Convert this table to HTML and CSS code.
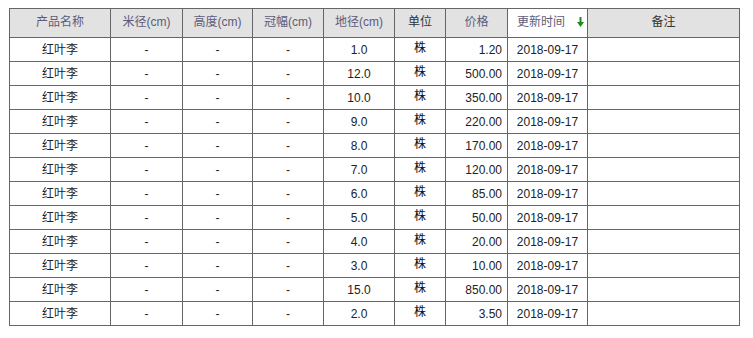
FILE: index.html
```html
<!DOCTYPE html>
<html>
<head>
<meta charset="utf-8">
<link rel="stylesheet" href="styles.css">
</head>
<body>
<table class="grid">
  <colgroup>
    <col class="c-name"><col class="c-w72"><col class="c-w70"><col class="c-w71"><col class="c-w71"><col class="c-unit"><col class="c-price"><col class="c-date"><col class="c-note">
  </colgroup>
  <thead>
    <tr>
      <th class="link">产品名称</th>
      <th class="link">米径(cm)</th>
      <th class="link">高度(cm)</th>
      <th class="link">冠幅(cm)</th>
      <th class="link">地径(cm)</th>
      <th>单位</th>
      <th class="link">价格</th>
      <th class="link sorted">更新时间<svg class="arrow" width="7" height="10" viewBox="0 0 7 10"><rect x="2.5" y="0" width="2" height="6" fill="#1e8a1e"/><path d="M0 5 L7 5 L3.5 10 Z" fill="#1e8a1e"/></svg></th>
      <th>备注</th>
    </tr>
  </thead>
  <tbody>
    <tr><td>红叶李</td><td>-</td><td>-</td><td>-</td><td>1.0</td><td class="cjk">株</td><td class="num">1.20</td><td>2018-09-17</td><td></td></tr>
    <tr><td>红叶李</td><td>-</td><td>-</td><td>-</td><td>12.0</td><td class="cjk">株</td><td class="num">500.00</td><td>2018-09-17</td><td></td></tr>
    <tr><td>红叶李</td><td>-</td><td>-</td><td>-</td><td>10.0</td><td class="cjk">株</td><td class="num">350.00</td><td>2018-09-17</td><td></td></tr>
    <tr><td>红叶李</td><td>-</td><td>-</td><td>-</td><td>9.0</td><td class="cjk">株</td><td class="num">220.00</td><td>2018-09-17</td><td></td></tr>
    <tr><td>红叶李</td><td>-</td><td>-</td><td>-</td><td>8.0</td><td class="cjk">株</td><td class="num">170.00</td><td>2018-09-17</td><td></td></tr>
    <tr><td>红叶李</td><td>-</td><td>-</td><td>-</td><td>7.0</td><td class="cjk">株</td><td class="num">120.00</td><td>2018-09-17</td><td></td></tr>
    <tr><td>红叶李</td><td>-</td><td>-</td><td>-</td><td>6.0</td><td class="cjk">株</td><td class="num">85.00</td><td>2018-09-17</td><td></td></tr>
    <tr><td>红叶李</td><td>-</td><td>-</td><td>-</td><td>5.0</td><td class="cjk">株</td><td class="num">50.00</td><td>2018-09-17</td><td></td></tr>
    <tr><td>红叶李</td><td>-</td><td>-</td><td>-</td><td>4.0</td><td class="cjk">株</td><td class="num">20.00</td><td>2018-09-17</td><td></td></tr>
    <tr><td>红叶李</td><td>-</td><td>-</td><td>-</td><td>3.0</td><td class="cjk">株</td><td class="num">10.00</td><td>2018-09-17</td><td></td></tr>
    <tr><td>红叶李</td><td>-</td><td>-</td><td>-</td><td>15.0</td><td class="cjk">株</td><td class="num">850.00</td><td>2018-09-17</td><td></td></tr>
    <tr><td>红叶李</td><td>-</td><td>-</td><td>-</td><td>2.0</td><td class="cjk">株</td><td class="num">3.50</td><td>2018-09-17</td><td></td></tr>
  </tbody>
</table>
</body>
</html>
```
FILE: styles.css
```css
html, body {
  margin: 0;
  padding: 0;
  background: #fff;
}
body {
  padding: 8px 0 0 9px;
  font-family: "Liberation Sans", "Noto Sans CJK SC", sans-serif;
  font-size: 12px;
  line-height: 14px;
  color: #222;
}
.grid {
  border-collapse: collapse;
  table-layout: fixed;
  width: 730px;
}
.c-name { width: 101px; }
.c-w72 { width: 72px; }
.c-w70 { width: 70px; }
.c-w71 { width: 71px; }
.c-unit { width: 51px; }
.c-price { width: 62px; }
.c-date { width: 80px; }
.c-note { width: 152px; }
.grid th, .grid td {
  border: 1px solid #666;
  padding: 0;
  text-align: center;
  white-space: nowrap;
  overflow: hidden;
  line-height: 14px;
}
.grid thead tr {
  height: 29px;
}
.grid th {
  background: #e2e2e2;
  font-weight: normal;
  color: #333;
  vertical-align: middle;
  padding-bottom: 3px;
}
.grid th.link {
  color: #5c5c7a;
}
.grid th.sorted {
  background: #fff;
  padding-left: 6px;
}
.arrow {
  margin-left: 12px;
  vertical-align: -1px;
}
.grid tbody tr {
  height: 24px;
}
.grid td {
  vertical-align: middle;
  padding-top: 1px;
}
.grid td.cjk {
  padding-top: 0;
  padding-bottom: 4px;
  color: #111;
}
.grid td.num {
  text-align: right;
  padding-right: 5px;
}
```
